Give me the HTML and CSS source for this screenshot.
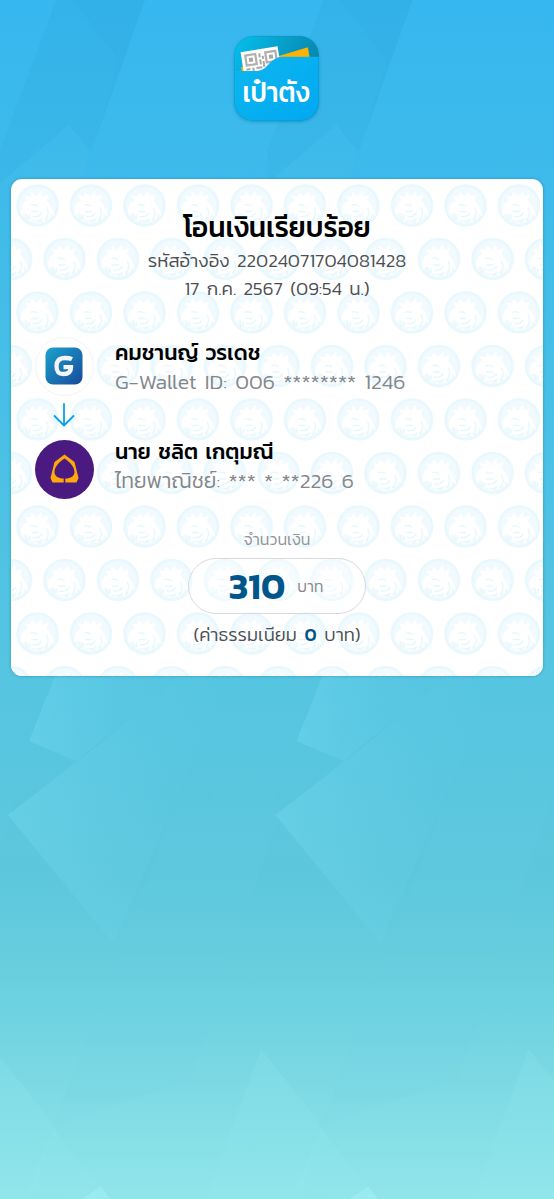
FILE: index.html
```
<!DOCTYPE html>
<html lang="th">
<head>
<meta charset="utf-8">
<title>โอนเงินเรียบร้อย</title>
<link rel="stylesheet" href="styles.css">
</head>
<body>
<div class="screen">
  <svg class="backdrop" viewBox="0 0 554 1199" aria-hidden="true">
    <defs>
      <linearGradient id="fade" x1="0" x2="1" y1="0" y2="0"><stop offset="0" stop-color="#7ce0f5" stop-opacity=".32"/><stop offset="1" stop-color="#62cdea" stop-opacity="0"/></linearGradient>
      <linearGradient id="shade" x1="0" x2="0" y1="0" y2="1"><stop offset="0" stop-color="#1689bd" stop-opacity=".1"/><stop offset="1" stop-color="#1689bd" stop-opacity=".06"/></linearGradient>
      <linearGradient id="peak" x1="0" x2="0" y1="0" y2="1"><stop offset="0" stop-color="#9cf2f7" stop-opacity=".14"/><stop offset="1" stop-color="#9cf2f7" stop-opacity=".04"/></linearGradient>
      <g id="facets">
        <path fill="url(#shade)" d="M56 0H145L78 190H0V150Z"/>
        <path fill="url(#shade)" opacity=".5" d="M72 0H145L91 152L119 60Z"/>
        <path fill="#4cc5f0" opacity=".3" d="M69 125L91 152L78 190H-8Z"/>
        <path fill="url(#fade)" d="M55 676L29 741L76 761L180 676Z"/>
        <path fill="url(#fade)" d="M8 815L102 742L180 676H228L177 798L113 943Z"/>
        <path fill="#70d8ee" opacity=".09" d="M253 766L207 801L177 798L53 1126L190 1080L283 803Z"/>
        <path fill="url(#peak)" d="M261 1049L320 1123L301 1199H206Z"/>
        <path fill="url(#peak)" d="M53 1128L29 1190L113 1204Z"/>
        <path fill="#a4f4f6" opacity=".4" d="M101 1186L82 1199H110Z"/>
      </g>
    </defs>
    <use href="#facets" x="-267.5"/><use href="#facets"/><use href="#facets" x="267.5"/>
  </svg>

  <header class="brand">
    <svg class="app-logo" viewBox="0 0 84 84">
      <defs>
        <linearGradient id="back" x1="0" x2="1" y1="0" y2=".5"><stop offset="0" stop-color="#05c0ee"/><stop offset="1" stop-color="#087fa5"/></linearGradient>
        <linearGradient id="front" x1="0" x2="1" y1="0" y2="1"><stop offset="0" stop-color="#0eb7ee"/><stop offset="1" stop-color="#00a8f2"/></linearGradient>
        <clipPath id="logo-shape"><rect width="84" height="84" rx="19"/></clipPath>
      </defs>
      <g clip-path="url(#logo-shape)">
        <rect width="84" height="84" fill="url(#back)"/>
        <path fill="#ffb300" d="M7 31L73 11L75 23L9 42Z"/>
        <g transform="translate(6.5 16) rotate(-9)">
          <rect width="37" height="25" fill="#fff"/>
          <g fill="none" stroke="#b0b0b0" stroke-width="2.200"><path d="M4 4h10v10H4zM24 4h10v10H24z"/></g>
          <path fill="#a8a8a8" d="M7 7h4v4H7zM27 7h4v4h-4zM17 4h2v4h-2zM20 7h2v3h-2zM17 10h2v5h-2zM3 17h4v2H3zM9 17h2v4H9zM13 17h6v2h-6zM20 12h2v6h-2zM24 17h5v2h-5zM4 21h3v2H4zM14 21h3v2h-3z"/>
        </g>
        <path fill="url(#front)" d="M0 34.500H23C33 34.500 36 20.500 48 20.500H84V84H0Z"/>
      </g>
      <rect x=".5" y=".5" width="83" height="83" rx="18.500" fill="none" stroke="#078fbd" stroke-opacity=".35"/>
      <text class="logo-name" x="8.500" y="65.500" textLength="66" lengthAdjust="spacingAndGlyphs">เป๋าตัง</text>
    </svg>
  </header>

  <main class="slip">
    <svg class="watermark" aria-hidden="true">
      <defs>
        <g id="bird">
          <circle r="20" fill="#f1fafe" stroke="#e8f8fc" stroke-width="2.600"/>
          <path fill="#fff" d="M-16 10C-18 2-15-3-10-5L-13-10L-7-9L-6-14L-1-9L4-15L5-9L11-11L9-5C12-2 16 4 17 11L13 8L12 14L9 11L7 17L3 15L-2 18L-5 14L-8 16L-9 10L-12 13L-12 7Z"/>
          <path fill="none" stroke="#e6f7fb" stroke-width="1.300" d="M-7 0Q-3-2 0 1M-6 6H1M-5 11Q3 12 4 7M9 2Q13 9 7 15M-11 8V15M-8 9V14M-3 15Q2 17 5 13"/>
        </g>
        <pattern id="birds" width="53.500" height="107" patternUnits="userSpaceOnUse">
          <use href="#bird" x="26.500" y="26.500"/><use href="#bird" x="0" y="80"/><use href="#bird" x="53.500" y="80"/>
        </pattern>
      </defs>
      <rect width="100%" height="100%" fill="url(#birds)"/>
    </svg>

    <section class="summary">
      <h1>โอนเงินเรียบร้อย</h1>
      <p>รหัสอ้างอิง 22024071704081428</p>
      <p>17 ก.ค. 2567 (09:54 น.)</p>
    </section>

    <section class="party">
      <div class="avatar wallet">
        <svg viewBox="0 0 38 38" width="38" height="38">
          <defs><linearGradient id="wallet" x1="0" x2="1" y1="0" y2="1"><stop offset="0" stop-color="#1ba3cd"/><stop offset="1" stop-color="#174a9b"/></linearGradient></defs>
          <rect x=".5" y=".5" width="37" height="37" rx="7.500" fill="url(#wallet)"/>
          <path fill="none" stroke="#f5f5f5" stroke-width="4.300" d="M27 12.200C25 11.200 23 11 20 11C14 11 11.500 14 11.500 19C11.500 24.500 13.500 27 18.500 27C23.500 27 26 25 26 20.200H18.500"/>
        </svg>
      </div>
      <div class="details">
        <h2>คมชานญ์ วรเดช</h2>
        <p class="account">G-Wallet ID: 006 ******** 1246</p>
      </div>
    </section>

    <svg class="arrow" viewBox="0 0 22 24"><path d="M11 1V22M1.500 13L11 22.500L20.500 13"/></svg>

    <section class="party receiver">
      <div class="avatar bank">
        <svg viewBox="0 0 30 30" width="30" height="30">
          <path fill="#ffa80b" fill-rule="evenodd" d="M14.500 .5L24.500 8L28.500 24L26.500 28.500H15.300V24.500H17.500C22 23.500 24.500 21.500 24.500 18C24.500 12.500 19.500 8 14.500 4.500C9.500 8 4.500 12.500 4.500 18C4.500 21.500 7 23.500 11.500 24.500H13.700V28.500H2.500L.5 24L4.500 8Z"/>
        </svg>
      </div>
      <div class="details">
        <h2>นาย ชลิต เกตุมณี</h2>
        <p class="account">ไทยพาณิชย์: *** * **226 6</p>
      </div>
    </section>

    <section class="total">
      <p class="label">จำนวนเงิน</p>
      <div class="amount"><strong>310</strong><span class="unit">บาท</span></div>
      <p class="fee">(ค่าธรรมเนียม <b>0</b> บาท)</p>
    </section>
  </main>
</div>
</body>
</html>
```
FILE: styles.css
```
* { box-sizing: border-box; }
body { margin: 0; }
h1, h2, p { margin: 0; white-space: nowrap; }

.screen {
  position: relative;
  width: 554px;
  height: 1199px;
  overflow: hidden;
  padding: 36px 11px 0;
  font-family: "Kanit", "Prompt", "Noto Sans Thai", "Inter", sans-serif;
  font-weight: 300;
  color: #4d4e51;
  background: linear-gradient(#36b7ef 0, #3ebbea 190px, #56c5e1 680px, #5dc7dc 880px, #69cfdf 980px, #7ad8e3 1070px, #91e5ea 1199px);
}
.backdrop { position: absolute; inset: 0; width: 554px; height: 1199px; }

.brand { position: relative; display: flex; justify-content: center; height: 143px; }
.app-logo { width: 85px; height: 85px; margin-right: 1px; border-radius: 19px; box-shadow: 0 1px 3px rgba(0, 80, 130, .35); }
.logo-name { font-size: 28px; font-weight: 500; fill: #fff; }

.slip {
  position: relative;
  height: 497px;
  padding-top: 30px;
  border-radius: 11px;
  overflow: hidden;
  background: #fff;
  box-shadow: 0 0 3px rgba(0, 90, 140, .45);
}
.watermark { position: absolute; inset: 0; width: 100%; height: 100%; }
.slip > section, .arrow { position: relative; }

.summary { text-align: center; height: 127px; }
.summary h1 { font-size: 28px; line-height: 37px; font-weight: 500; color: #000; }
.summary p { font-size: 18.8px; line-height: 28px; word-spacing: 3.1px; }

.party { display: flex; align-items: center; height: 60px; padding-left: 24px; gap: 21px; }
.avatar { display: flex; align-items: center; justify-content: center; width: 59px; height: 59px; border-radius: 50%; }
.wallet { background: #fff; border: 1px solid #f4f4f4; }
.wallet svg { margin-right: 1px; }
.bank { background: #4b1a80; }
.details h2 { font-size: 21.5px; line-height: 28px; font-weight: 500; color: #000; word-spacing: 2.5px; }
.account { font-size: 21.3px; line-height: 31px; color: #85868a; word-spacing: 3.4px; }
.details { padding-top: 2px; }
.receiver .details { padding: 0 0 6px; }

.arrow { display: block; width: 22px; height: 24px; margin: 7px 0 12px 42px; fill: none; stroke: #05a5e4; stroke-width: 1.8; stroke-linecap: round; stroke-linejoin: round; }

.total { display: flex; flex-direction: column; align-items: center; padding-top: 28px; }
.label { height: 31px; line-height: 24px; font-size: 16.1px; color: #8f9194; }
.amount { display: flex; align-items: center; justify-content: center; gap: 12px; width: 178px; height: 56px; padding-right: 2px; border: 1.5px solid #d8d9db; border-radius: 29px; background: rgba(255, 255, 255, .3); }
.amount strong { font-size: 36.8px; font-weight: 600; color: #00568a; }
.unit { font-size: 15.8px; color: #85868a; }
.fee { font-size: 18.5px; line-height: 42px; word-spacing: 3.5px; }
.fee b { font-weight: 500; color: #00568a; }
```
